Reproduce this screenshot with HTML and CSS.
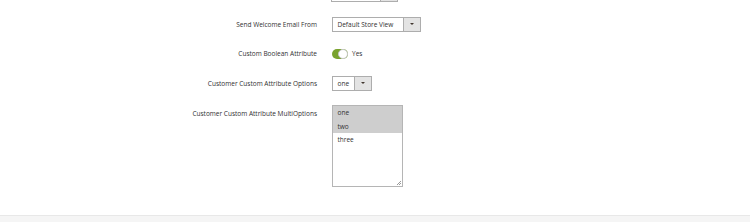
FILE: index.html
```html
<!DOCTYPE html>
<html lang="en">
<head>
  <meta charset="UTF-8" />
  <title>Customer Account Information</title>
  <link rel="stylesheet" href="styles.css">
</head>
<body>
  <div class="page">
    <form class="fieldset">
      <div class="field field-cut">
        <div class="label"></div>
        <div class="control">
          <div class="select select-wide">
            <span class="select-value"></span>
            <span class="select-btn"><span class="arrow"></span></span>
          </div>
        </div>
      </div>

      <div class="field">
        <div class="label">Send Welcome Email From</div>
        <div class="control">
          <div class="select select-store">
            <span class="select-value">Default Store View</span>
            <span class="select-btn"><span class="arrow"></span></span>
          </div>
        </div>
      </div>

      <div class="field">
        <div class="label">Custom Boolean Attribute</div>
        <div class="control">
          <span class="switch"><span class="knob"></span></span>
          <span class="switch-text">Yes</span>
        </div>
      </div>

      <div class="field">
        <div class="label">Customer Custom Attribute Options</div>
        <div class="control">
          <div class="select select-small">
            <span class="select-value">one</span>
            <span class="select-btn"><span class="arrow"></span></span>
          </div>
        </div>
      </div>

      <div class="field field-top">
        <div class="label">Customer Custom Attribute MultiOptions</div>
        <div class="control">
          <div class="multiselect">
            <div class="option selected">one</div>
            <div class="option selected">two</div>
            <div class="option">three</div>
            <span class="resize"></span>
          </div>
        </div>
      </div>
    </form>
  </div>
  <div class="footer"></div>
</body>
</html>
```

FILE: styles.css
```css
body {
  margin: 0;
  background: #fff;
  color: #303030;
  font-family: 'Open Sans', 'Noto Sans', sans-serif;
  font-size: 6.5px;
}
.page {
  height: 215px;
  overflow: hidden;
}
.fieldset {
  display: flex;
  flex-direction: column;
  gap: 14.5px;
  margin-top: -13px;
}
.field {
  display: flex;
  align-items: center;
  min-height: 15px;
}
.field-top {
  align-items: flex-start;
}
.field-top .label {
  padding-top: 3.5px;
}
.label {
  width: 332px;
  padding-right: 15px;
  box-sizing: border-box;
  text-align: right;
  line-height: 9px;
}
.control {
  display: flex;
  align-items: center;
}
.select {
  display: flex;
  height: 15px;
  border: 1px solid #adadad;
  box-sizing: border-box;
  background: #fff;
  line-height: 13px;
}
.select-value {
  flex: 1;
  padding-left: 4.5px;
}
.select-btn {
  width: 16px;
  border-left: 1px solid #adadad;
  background: #e3e3e3;
  display: flex;
  align-items: center;
  justify-content: center;
}
.arrow {
  width: 0;
  height: 0;
  border-left: 2px solid transparent;
  border-right: 2px solid transparent;
  border-top: 2.5px solid #41362f;
}
.select-wide {
  width: 67px;
  margin-left: -1px;
}
.select-store {
  width: 89px;
}
.select-small {
  width: 40px;
}
.switch {
  position: relative;
  width: 16px;
  height: 10px;
  border-radius: 5px;
  background: #79a22e;
  box-sizing: border-box;
}
.knob {
  position: absolute;
  top: 0;
  right: 0;
  width: 10px;
  height: 10px;
  border-radius: 50%;
  background: #fff;
  border: 1px solid #c8c8c8;
  box-sizing: border-box;
}
.switch-text {
  margin-left: 4px;
}
.multiselect {
  position: relative;
  width: 71px;
  height: 82px;
  border: 1px solid #b5b5b5;
  box-sizing: border-box;
  background: #fff;
}
.option {
  height: 13.5px;
  line-height: 13.5px;
  padding-left: 4.5px;
}
.option.selected {
  background: #cecece;
}
.resize {
  position: absolute;
  right: 1px;
  bottom: 1px;
  width: 4px;
  height: 4px;
  background: linear-gradient(135deg, transparent 45%, #999 45%, #999 55%, transparent 55%, transparent 70%, #999 70%, #999 80%, transparent 80%);
}
.footer {
  height: 7px;
  border-top: 1px solid #e8e8e8;
  background: #f5f5f5;
}
```
